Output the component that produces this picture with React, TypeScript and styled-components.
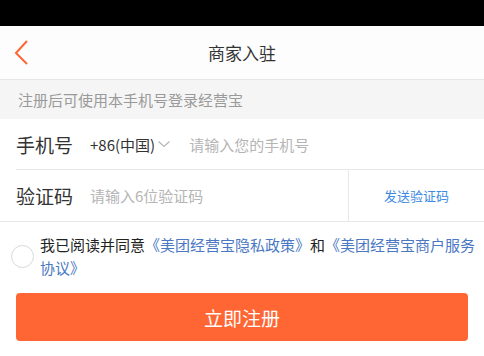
import React from "react";
import styled, { createGlobalStyle } from "styled-components";

const Global = createGlobalStyle`
  html, body { margin: 0; padding: 0; background: #ffffff; }
  body { font-family: "Noto Sans CJK SC", "Noto Sans", sans-serif; }
  * { box-sizing: border-box; }
`;

const Page = styled.div`
  width: 484px;
  height: 356px;
  display: flex;
  flex-direction: column;
  background: #ffffff;
  overflow: hidden;
`;

const StatusBar = styled.div`
  height: 26px;
  background: #000000;
  flex-shrink: 0;
`;

const Header = styled.div`
  height: 54px;
  display: flex;
  align-items: center;
  justify-content: center;
  position: relative;
  background: #fdfdfd;
  border-bottom: 1px solid #e6e6e6;
  flex-shrink: 0;
`;

const BackButton = styled.div`
  position: absolute;
  left: 13px;
  top: 13px;
  width: 18px;
  height: 28px;
`;

const Title = styled.div`
  font-size: 17px;
  color: #333333;
  line-height: 24px;
`;

const Notice = styled.div`
  height: 39px;
  background: #f5f5f5;
  color: #9a9a9a;
  font-size: 15px;
  padding-left: 18px;
  display: flex;
  align-items: center;
  flex-shrink: 0;
`;

const Form = styled.div`
  display: flex;
  flex-direction: column;
  background: #ffffff;
`;

const PhoneRow = styled.div`
  height: 51px;
  margin-left: 16px;
  display: flex;
  align-items: center;
  border-bottom: 1px solid #e8e8e8;
`;

const CodeRow = styled.div`
  height: 52px;
  display: flex;
  align-items: stretch;
  border-bottom: 1px solid #e8e8e8;
`;

const CodeMain = styled.div`
  flex: 1;
  display: flex;
  align-items: center;
  padding-left: 16px;
`;

const Label = styled.div`
  font-size: 19px;
  color: #333333;
  width: 74px;
  flex-shrink: 0;
`;

const Country = styled.div`
  display: flex;
  align-items: center;
  font-size: 15px;
  color: #333333;
  margin-right: 18px;
`;

const Placeholder = styled.div`
  font-size: 15px;
  color: #b5b5b5;
`;

const SendCode = styled.div`
  width: 136px;
  border-left: 1px solid #e8e8e8;
  display: flex;
  align-items: center;
  justify-content: center;
  font-size: 13px;
  color: #3d8ae0;
`;

const Agreement = styled.div`
  display: flex;
  align-items: center;
  padding: 11px 6px 0 11px;
`;

const Radio = styled.div`
  width: 23px;
  height: 23px;
  border-radius: 50%;
  border: 1px solid #d9d9d9;
  flex-shrink: 0;
  margin-right: 6px;
`;

const AgreeText = styled.div`
  font-size: 15px;
  line-height: 23px;
  color: #222222;
`;

const Link = styled.span`
  color: #4a78c2;
`;

const Submit = styled.div`
  margin: 14px 16px 0 16px;
  height: 48px;
  border-radius: 4px;
  background: #ff6633;
  color: #ffffff;
  font-size: 19px;
  display: flex;
  align-items: center;
  justify-content: center;
`;

export default function App() {
  return (
    <Page>
      <Global />
      <StatusBar />
      <Header>
        <BackButton>
          <svg width="18" height="28" viewBox="0 0 18 28">
            <polyline
              points="14,2 3,14 14,25"
              fill="none"
              stroke="#ff6633"
              strokeWidth="2"
            />
          </svg>
        </BackButton>
        <Title>商家入驻</Title>
      </Header>
      <Notice>注册后可使用本手机号登录经营宝</Notice>
      <Form>
        <PhoneRow>
          <Label>手机号</Label>
          <Country>
            +86(中国)
            <svg width="14" height="10" viewBox="0 0 14 10" style={{ marginLeft: 2 }}>
              <polyline points="1.5,2.5 7,7.5 12.5,2.5" fill="none" stroke="#b5b5b5" strokeWidth="1.2" />
            </svg>
          </Country>
          <Placeholder>请输入您的手机号</Placeholder>
        </PhoneRow>
        <CodeRow>
          <CodeMain>
            <Label>验证码</Label>
            <Placeholder>请输入6位验证码</Placeholder>
          </CodeMain>
          <SendCode>发送验证码</SendCode>
        </CodeRow>
      </Form>
      <Agreement>
        <Radio />
        <AgreeText>
          我已阅读并同意<Link>《美团经营宝隐私政策》</Link>和<Link>《美团经营宝商户服务协议》</Link>
        </AgreeText>
      </Agreement>
      <Submit>立即注册</Submit>
    </Page>
  );
}
